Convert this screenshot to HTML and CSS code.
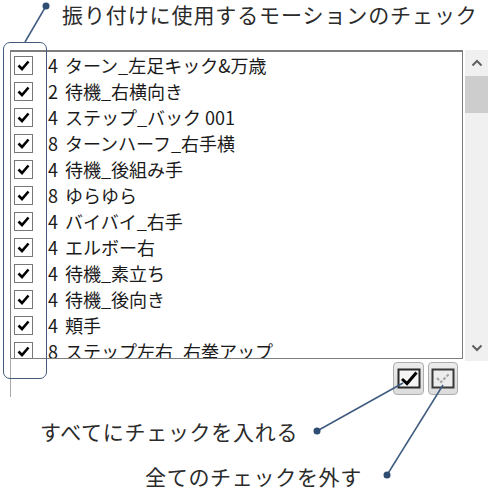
FILE: index.html
```html
<!DOCTYPE html>
<html lang="ja">
<head>
    <meta charset="UTF-8">
    <title>モーションのチェック</title>
    <link rel="stylesheet" href="styles.css">
</head>
<body>
    <div class="page">
        <div class="title">振り付けに使用するモーションのチェック</div>

        <div class="list-area">
            <div class="list">
                <div class="row"><span class="cb"></span><span class="num">4</span><span class="name">ターン_左足キック&amp;万歳</span></div>
                <div class="row"><span class="cb"></span><span class="num">2</span><span class="name">待機_右横向き</span></div>
                <div class="row"><span class="cb"></span><span class="num">4</span><span class="name">ステップ_バック 001</span></div>
                <div class="row"><span class="cb"></span><span class="num">8</span><span class="name">ターンハーフ_右手横</span></div>
                <div class="row"><span class="cb"></span><span class="num">4</span><span class="name">待機_後組み手</span></div>
                <div class="row"><span class="cb"></span><span class="num">8</span><span class="name">ゆらゆら</span></div>
                <div class="row"><span class="cb"></span><span class="num">4</span><span class="name">バイバイ_右手</span></div>
                <div class="row"><span class="cb"></span><span class="num">4</span><span class="name">エルボー右</span></div>
                <div class="row"><span class="cb"></span><span class="num">4</span><span class="name">待機_素立ち</span></div>
                <div class="row"><span class="cb"></span><span class="num">4</span><span class="name">待機_後向き</span></div>
                <div class="row"><span class="cb"></span><span class="num">4</span><span class="name">頬手</span></div>
                <div class="row"><span class="cb"></span><span class="num">8</span><span class="name">ステップ左右_右拳アップ</span></div>
            </div>
            <div class="scrollbar">
                <div class="sb-btn">
                    <svg width="12" height="8" viewBox="0 0 12 8"><path d="M1.5 6.5 L6 2 L10.5 6.5" fill="none" stroke="#606060" stroke-width="2"/></svg>
                </div>
                <div class="sb-thumb"></div>
                <div class="sb-track"></div>
                <div class="sb-btn">
                    <svg width="12" height="8" viewBox="0 0 12 8"><path d="M1.5 1.5 L6 6 L10.5 1.5" fill="none" stroke="#606060" stroke-width="2"/></svg>
                </div>
            </div>
        </div>

        <div class="footer">
            <div class="stub"></div>
            <div class="buttons">
                <div class="tool-btn">
                    <svg width="24" height="21" viewBox="0 0 24 21">
                        <rect x="1.5" y="1.5" width="21" height="18" fill="#f4f4f4" stroke="#2a2a2a" stroke-width="2"/>
                        <path d="M5 11 L10 15.5 L19.5 4.5" fill="none" stroke="#000" stroke-width="3"/>
                    </svg>
                </div>
                <div class="tool-btn">
                    <svg width="24" height="21" viewBox="0 0 24 21">
                        <rect x="1.5" y="1.5" width="21" height="18" fill="#ededed" stroke="#3a3a3a" stroke-width="2"/>
                        <path d="M6 10 L10 14 L18 6" fill="none" stroke="#a8a8a8" stroke-width="2.2" stroke-dasharray="3 1.5"/>
                    </svg>
                </div>
            </div>
        </div>

        <div class="label label-all">すべてにチェックを入れる</div>
        <div class="label label-none">全てのチェックを外す</div>

        <div class="highlight"></div>
        <svg class="callouts" width="493" height="492" viewBox="0 0 493 492">
            <line x1="46" y1="6" x2="25" y2="42"/>
            <circle cx="46" cy="6" r="3.5"/>
            <line x1="317" y1="431" x2="403" y2="383"/>
            <circle cx="317" cy="431" r="3.5"/>
            <line x1="387" y1="475" x2="443" y2="385"/>
            <circle cx="387" cy="475" r="3.5"/>
        </svg>
    </div>
</body>
</html>
```

FILE: styles.css
```css
* {
    margin: 0;
    padding: 0;
    box-sizing: border-box;
}

body {
    font-family: "Noto Sans CJK JP", "Noto Sans", sans-serif;
    background: white;
    color: #222;
}

.page {
    position: relative;
    width: 493px;
    height: 492px;
    overflow: hidden;
}

.title {
    height: 50px;
    padding-left: 62px;
    font-size: 21px;
    line-height: 28px;
    letter-spacing: 0.9px;
    color: #2b2b2b;
}

.list-area {
    display: flex;
    align-items: flex-start;
}

.list {
    margin-left: 10px;
    width: 453px;
    height: 309px;
    border: 1px solid #7d7d7d;
    border-top-width: 2px;
    overflow: hidden;
}

.row {
    display: flex;
    align-items: center;
    height: 26px;
    font-size: 18px;
    color: #1a1a1a;
}

.cb {
    width: 19px;
    height: 19px;
    margin-left: 3px;
    border: 1px solid #777;
    background: white url("data:image/svg+xml;utf8,<svg xmlns='http://www.w3.org/2000/svg' width='17' height='17' viewBox='0 0 17 17'><path d='M3.5 8.5 L7 12 L13.5 4.5' fill='none' stroke='black' stroke-width='2.6'/></svg>") no-repeat center;
}

.num {
    width: 17px;
    margin-left: 15px;
}

.name {
    white-space: nowrap;
}

.scrollbar {
    margin-left: 2px;
    width: 23px;
    height: 311px;
    background: #f0f0f0;
    display: flex;
    flex-direction: column;
}

.sb-btn {
    height: 26px;
    display: flex;
    align-items: center;
    justify-content: center;
}

.sb-thumb {
    height: 37px;
    background: #cdcdcd;
}

.sb-track {
    flex: 1;
}

.footer {
    display: flex;
    align-items: flex-start;
}

.stub {
    margin-left: 10px;
    width: 1px;
    height: 39px;
    background: #a8a8a8;
    margin-top: -3px;
}

.buttons {
    margin-left: auto;
    margin-right: 35px;
    margin-top: 1px;
    display: flex;
    gap: 4px;
}

.tool-btn {
    width: 31px;
    height: 33px;
    border: 1px solid #adadad;
    border-radius: 4px;
    background: linear-gradient(#ececec, #dcdcdc);
    display: flex;
    align-items: center;
    justify-content: center;
}

.tool-btn + .tool-btn {
    width: 30px;
}

.label {
    font-size: 21px;
    line-height: 28px;
    letter-spacing: 0.7px;
    color: #2b2b2b;
    white-space: nowrap;
}

.label-all {
    margin-top: 20px;
    padding-left: 40px;
}

.label-none {
    margin-top: 17px;
    padding-left: 145px;
}

.highlight {
    position: absolute;
    left: 3px;
    top: 42px;
    width: 44px;
    height: 337px;
    border: 1.5px solid #425b7c;
    border-radius: 7px;
}

.callouts {
    position: absolute;
    left: 0;
    top: 0;
}

.callouts line {
    stroke: #3f5b80;
    stroke-width: 1.5;
}

.callouts circle {
    fill: #2f4d73;
}
```
